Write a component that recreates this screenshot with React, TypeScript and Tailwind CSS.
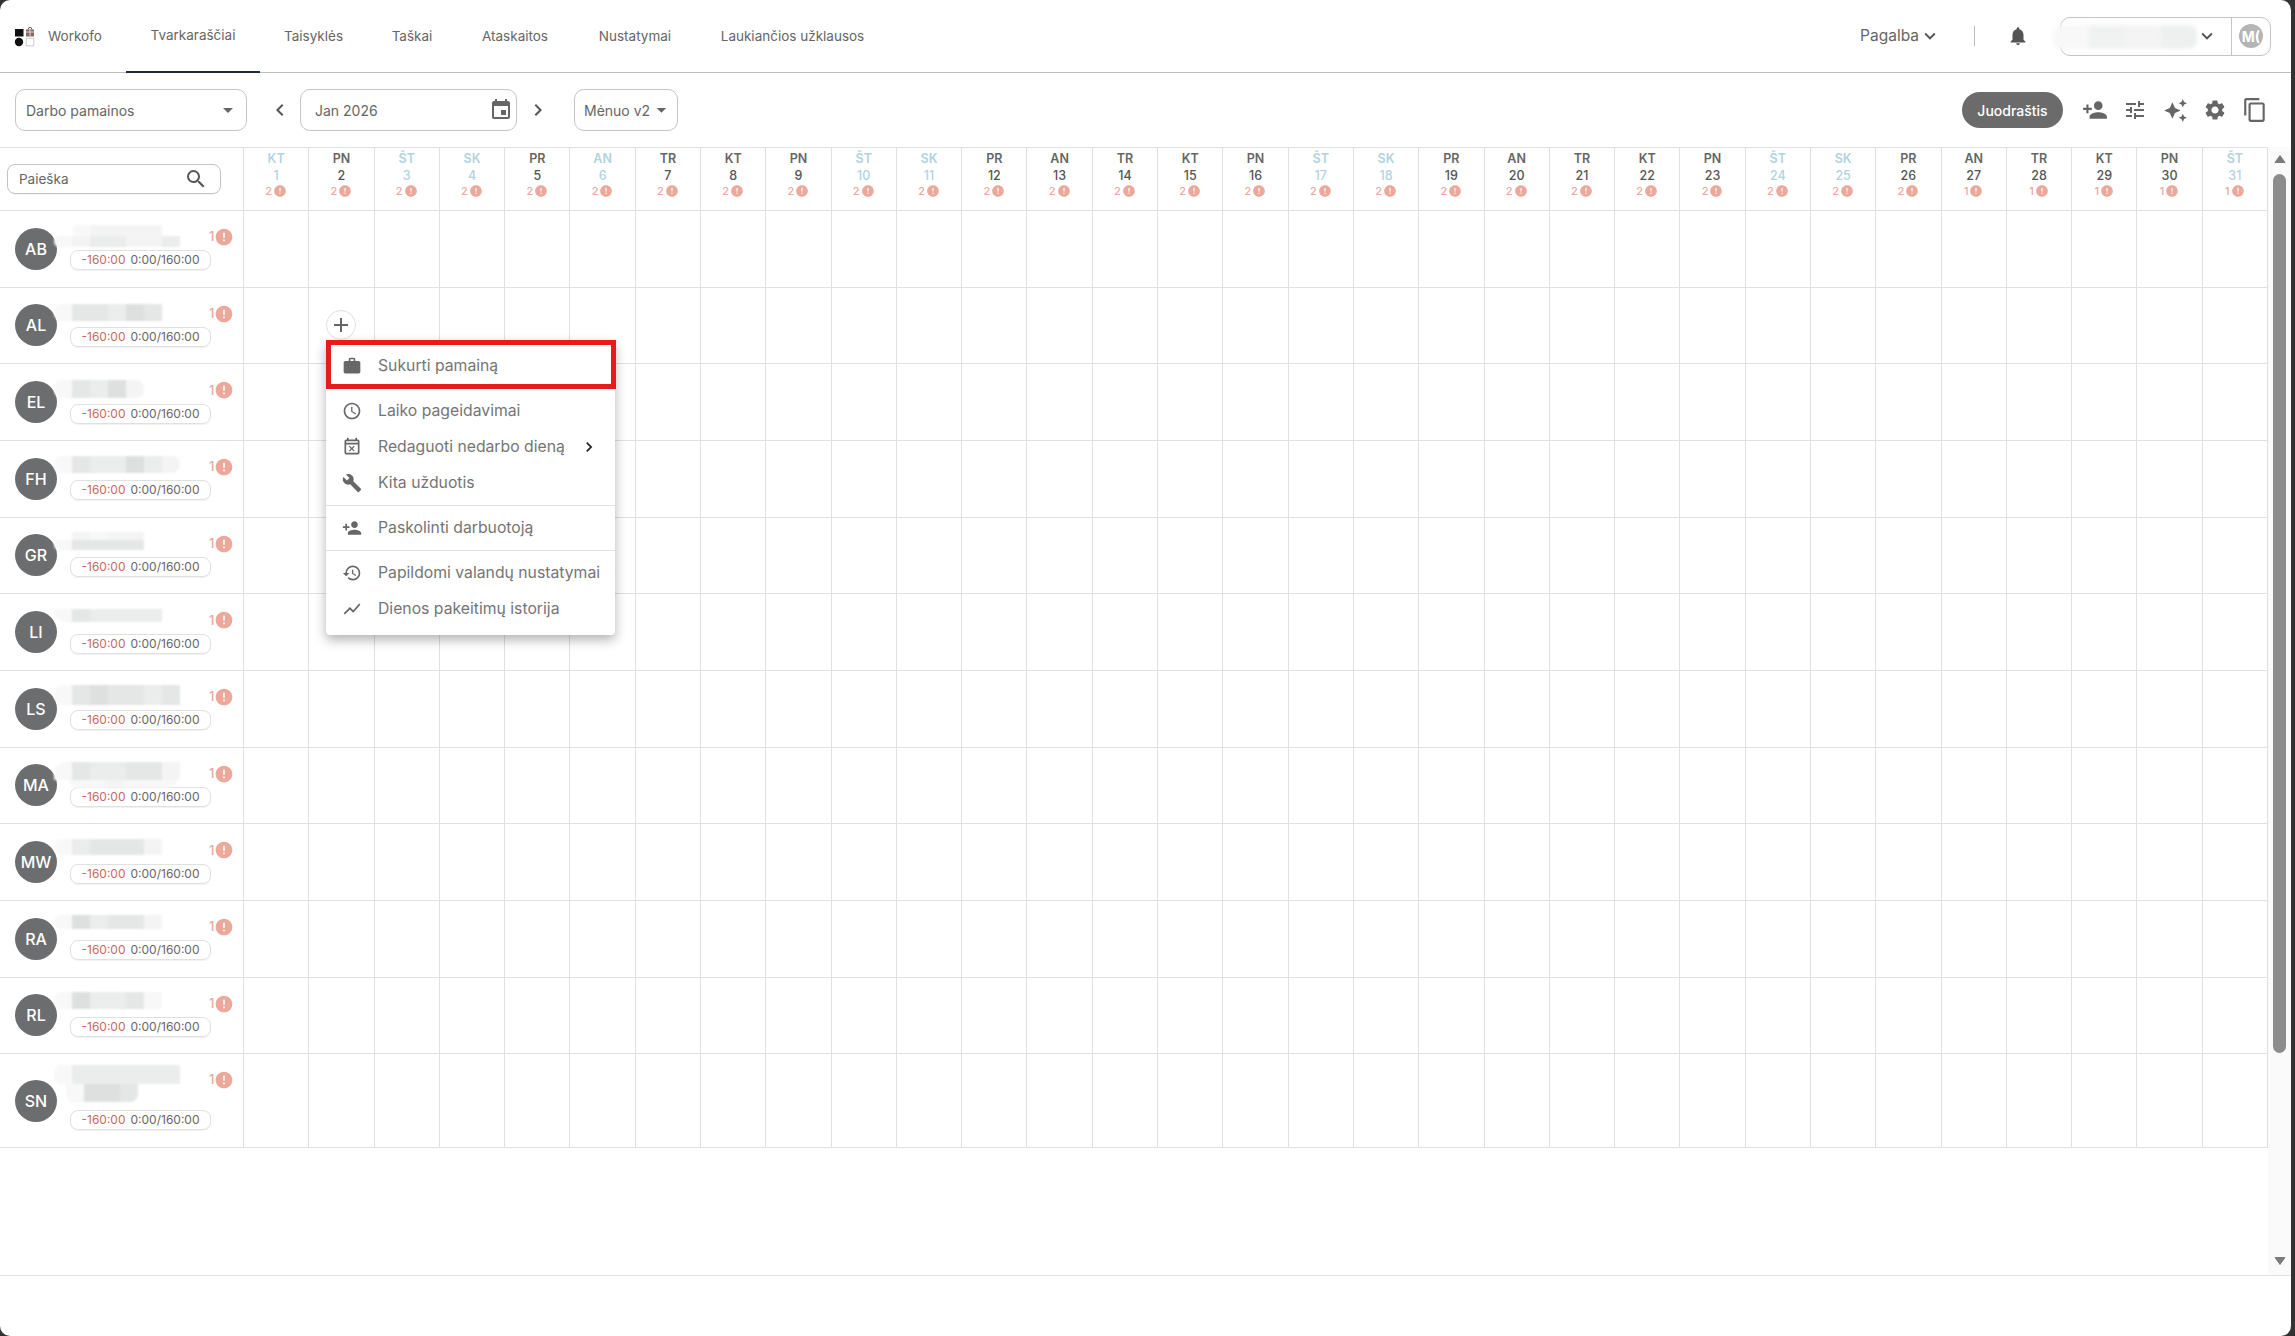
import React from "react";
import {
  MdAccessTime, MdAdd, MdArrowDropDown, MdAutoAwesome, MdBuild, MdChevronLeft, MdChevronRight, MdError, MdEvent,
  MdHistory, MdKeyboardArrowDown, MdNotifications, MdOutlineContentCopy, MdOutlineEventBusy, MdPersonAdd, MdSearch,
  MdSettings, MdShowChart, MdTune, MdWork,
} from "react-icons/md";

const tabs = [
  { label: "Tvarkaraščiai", w: "w-[134px]", active: true },
  { label: "Taisyklės", w: "w-[107px]" },
  { label: "Taškai", w: "w-[90px]" },
  { label: "Ataskaitos", w: "w-[116px]" },
  { label: "Nustatymai", w: "w-[124px]" },
  { label: "Laukiančios užklausos", w: "w-[191px]" },
];

const seq = ["KT","PN","ŠT","SK","PR","AN","TR","KT","PN","ŠT","SK","PR","AN","TR","KT","PN","ŠT","SK","PR","AN","TR","KT","PN","ŠT","SK","PR","AN","TR","KT","PN","ŠT"];
const off = new Set([1, 3, 4, 6, 10, 11, 17, 18, 24, 25, 31]);
const days = seq.map((n, i) => ({ d: i + 1, n, off: off.has(i + 1), c: i + 1 >= 27 ? 1 : 2 }));

type Strip = { cls: string; tiles: string[] };
const A = "bg-[#f3f4f3]", B = "bg-[#ebecec]", C = "bg-[#e5e6e6]", D = "bg-[#dedfdf]", E = "bg-[#f7f8f7]";

const people: { id: string; big?: boolean; strips: Strip[] }[] = [
  { id: "AB", strips: [
    { cls: "ml-[9px] h-[11px] rounded-l-md", tiles: [E, A, A, A, A] },
    { cls: "-ml-[9px] h-[11px] rounded-l-lg", tiles: [E, A, B, B, A, A, B] },
  ] },
  { id: "AL", strips: [{ cls: "-ml-[9px] mt-[2px] h-[17px] rounded-l-lg", tiles: [E, C, C, B, D, C] }] },
  { id: "EL", strips: [{ cls: "-ml-[9px] mt-[1px] h-[18px] rounded-lg", tiles: [E, C, B, D, A] }] },
  { id: "FH", strips: [{ cls: "-ml-[9px] mt-[1px] h-[17px] rounded-lg", tiles: [E, C, B, B, D, B, A] }] },
  { id: "GR", strips: [
    { cls: "ml-[9px] h-[8px]", tiles: [A, E, A, A] },
    { cls: "-ml-[9px] h-[10px] rounded-l-lg", tiles: [E, C, C, C, C] },
  ] },
  { id: "LI", strips: [{ cls: "-ml-[9px] h-[13px] rounded-bl-xl", tiles: [E, C, B, B, B, B] }] },
  { id: "LS", strips: [{ cls: "-ml-[9px] h-[20px] rounded-l-xl", tiles: [E, C, D, C, C, B, C] }] },
  { id: "MA", strips: [
    { cls: "-ml-[9px] h-[18px] rounded-tl-xl", tiles: [E, C, B, B, C, C, A] },
    { cls: "ml-[6px] h-[8px] rounded-b-lg", tiles: [E, E, A, E, E, E] },
  ] },
  { id: "MW", strips: [{ cls: "-ml-[9px] h-[16px] rounded-l-lg", tiles: [E, B, C, C, C, A] }] },
  { id: "RA", strips: [{ cls: "-ml-[9px] h-[14px] rounded-l-lg", tiles: [E, D, B, C, C, A] }] },
  { id: "RL", strips: [{ cls: "-ml-[9px] h-[17px] rounded-l-lg", tiles: [E, D, B, B, C, E] }] },
  { id: "SN", big: true, strips: [
    { cls: "-ml-[9px] -mt-[4px] h-[19px] rounded-l-lg", tiles: [E, B, B, B, B, B, B] },
    { cls: "ml-[3px] h-[18px] rounded-b-lg", tiles: [E, D, D, C] },
  ] },
];

const menuTop = [{ icon: MdWork, t: "Sukurti pamainą" }];
const menuA = [
  { icon: MdAccessTime, t: "Laiko pageidavimai" },
  { icon: MdOutlineEventBusy, t: "Redaguoti nedarbo dieną", more: true },
  { icon: MdBuild, t: "Kita užduotis" },
];
const menuB = [{ icon: MdPersonAdd, t: "Paskolinti darbuotoją" }];
const menuC = [
  { icon: MdHistory, t: "Papildomi valandų nustatymai" },
  { icon: MdShowChart, t: "Dienos pakeitimų istorija" },
];

function MenuItem({ item }: { item: { icon: React.ComponentType<{ size?: number; className?: string }>; t: string; more?: boolean } }) {
  const Icon = item.icon;
  return (
    <div className="flex h-9 items-center pl-4 text-[15.75px] text-[#757575]">
      <span className="flex w-[36px] shrink-0 items-center"><Icon size={20} className="text-[#666]" /></span>
      <span className="whitespace-nowrap">{item.t}</span>
      {item.more && <MdChevronRight size={20} className="absolute left-[253px] text-[#222]" />}
    </div>
  );
}

function Triangle({ down }: { down?: boolean }) {
  return (
    <svg width="12" height="8" viewBox="0 0 12 8" className="shrink-0">
      <path d={down ? "M1 0.5H11L6 7.5Z" : "M1 7.5H11L6 0.5Z"} fill="#7b7b7b" stroke="#7b7b7b" strokeLinejoin="round" />
    </svg>
  );
}

export default function App() {
  return (
    <div className="h-screen bg-[#333] font-['Inter','Liberation_Sans',sans-serif]">
      <div className="relative flex h-full w-[2291px] flex-col overflow-hidden rounded-[10px] bg-white">
        {/* top bar */}
        <header className="flex h-[73px] shrink-0 items-stretch border-b border-[#bdbdbd] pl-[14px] pr-[20px] text-[#666]">
          <div className="flex items-center">
            <svg width="21" height="20" viewBox="0 0 21 20" className="mr-[13px] mt-[1px]">
              <rect x="1" y="2" width="8.5" height="7.5" fill="#111" />
              <rect x="12" y="2.5" width="8" height="7" fill="#8a6a60" />
              <path d="M16 2.5V9.5M12 5H20" stroke="#eee" strokeWidth="0.8" />
              <path d="M14 2.5L15 0.5H17L18 2.5" stroke="#7a5a50" fill="none" />
              <circle cx="5" cy="15" r="4.2" fill="#111" />
              <rect x="12.3" y="11.3" width="7.5" height="7.5" fill="#fff" stroke="#ccc" />
            </svg>
            <span className="w-[53px] whitespace-nowrap text-[13.5px]">Workofo</span>
          </div>
          <nav className="ml-[25px] flex">
            {tabs.map((t) => (
              <div
                key={t.label}
                className={`flex ${t.w} items-center justify-center whitespace-nowrap text-[13.5px] ${t.active ? "-mb-px border-b-2 border-[#1e2a44]" : ""}`}
              >
                {t.label}
              </div>
            ))}
          </nav>
          <div className="ml-auto flex items-center">
            <span className="text-[15.5px]">Pagalba</span>
            <MdKeyboardArrowDown size={22} className="text-[#555]" />
            <span className="ml-[33px] h-[20px] w-px bg-[#bdbdbd]" />
            <MdNotifications size={22} className="ml-[32px] text-[#555]" />
            <div className="relative ml-[31px] flex h-[39px] w-[211px] items-center justify-end rounded-[10px] border border-[#c4c4c4]">
              <div className="absolute -left-[8px] top-[7px] flex h-[24px] overflow-hidden rounded-lg blur-[2px]">
                <span className="w-[36px] bg-[#f7f8f7]" />
                <span className="w-[36px] bg-[#f0f1f1]" />
                <span className="w-[36px] bg-[#f3f4f3]" />
                <span className="w-[36px] bg-[#eeefef]" />
              </div>
              <MdKeyboardArrowDown size={22} className="mr-[13px] text-[#555]" />
              <div className="flex h-full w-[39px] items-center justify-center border-l border-[#c4c4c4]">
                <div className="flex h-6 w-6 items-center justify-center overflow-hidden rounded-full bg-[#b5b5b5] text-[14px] font-bold text-white">M(</div>
              </div>
            </div>
          </div>
        </header>

        {/* toolbar */}
        <div className="flex h-[74px] shrink-0 items-center pl-[15px] pr-[16px] text-[14px] text-[#666]">
          <div className="flex h-[42px] w-[232px] items-center justify-between rounded-[10px] border border-[#c4c4c4] pl-[10px] pr-[6px]">
            <span>Darbo pamainos</span>
            <MdArrowDropDown size={24} className="text-[#666]" />
          </div>
          <MdChevronLeft size={24} className="ml-[21px] mr-[8px] text-[#555]" />
          <div className="flex h-[42px] w-[217px] items-center justify-between rounded-[10px] border border-[#c4c4c4] pl-[14px] pr-[3px]">
            <span>Jan 2026</span>
            <MdEvent size={24} className="text-[#666]" />
          </div>
          <MdChevronRight size={24} className="ml-[9px] mr-[24px] text-[#555]" />
          <div className="flex h-[42px] w-[104px] items-center justify-between rounded-[10px] border border-[#c4c4c4] pl-[9px] pr-[4px]">
            <span className="whitespace-nowrap">Mėnuo v2</span>
            <MdArrowDropDown size={24} className="text-[#666]" />
          </div>
          <div className="ml-auto flex items-center">
            <div className="mr-[12px] flex h-9 w-[101px] items-center justify-center rounded-full bg-[#6b6b6b] text-[14px] font-medium text-white">Juodraštis</div>
            <span className="flex w-10 justify-center"><MdPersonAdd size={26} /></span>
            <span className="flex w-10 justify-center"><MdTune size={24} /></span>
            <span className="flex w-10 justify-center"><MdAutoAwesome size={25} /></span>
            <span className="flex w-10 justify-center"><MdSettings size={24} /></span>
            <span className="flex w-10 justify-center"><MdOutlineContentCopy size={26} /></span>
          </div>
        </div>

        {/* schedule */}
        <div className="flex min-h-0 flex-1">
          <div className="grid h-fit w-[2268px] shrink-0 grid-cols-[244px_repeat(31,1fr)] grid-rows-[63px_repeat(11,76.67px)_94px] border-t border-[#e0e0e0]">
            <div className="flex items-center border-b border-r border-[#e0e0e0] pl-[7px]">
              <div className="flex h-[30px] w-[214px] items-center justify-between rounded-[8px] border border-[#c4c4c4] pl-[11px] pr-[12px] text-[13.5px] text-[#666] shadow-[0_1px_1px_rgba(0,0,0,0.05)]">
                <span>Paieška</span>
                <MdSearch size={24} className="text-[#555]" />
              </div>
            </div>
            {days.map((d) => (
              <div key={d.d} className={`flex flex-col items-center border-b border-r border-[#e0e0e0] pt-[2px] ${d.off ? "text-[#b2d3e0]" : "text-[#666]"}`}>
                <span className="h-[17px] text-[12.5px] font-semibold leading-[17px]">{d.n}</span>
                <span className={`h-[17px] text-[12.5px] font-medium leading-[17px] ${d.off ? "" : "text-[#555]"}`}>{d.d}</span>
                <span className="flex h-[14px] items-center gap-[1px] text-[11px] font-medium text-[#eca89b]">
                  {d.c}
                  <MdError size={14} className="text-[#eca89b]" />
                </span>
              </div>
            ))}
            {people.flatMap((p, r) => [
              <div key={p.id} className="flex items-start border-b border-r border-[#e0e0e0] pl-[15px]">
                <div className="flex h-full items-center">
                  <div className="flex h-[42px] w-[42px] items-center justify-center rounded-full bg-[#6c6d6f] text-[16px] font-medium text-white">{p.id}</div>
                </div>
                <div className="ml-[6px] flex h-full w-[148px] flex-col justify-center pb-[2px]">
                  <div className={`${p.big ? "mb-[5px] h-[36px]" : "mb-[3px] h-[22px]"} blur-[1px]`}>
                    {p.strips.map((s, i) => (
                      <div key={i} className={`flex w-fit overflow-hidden ${s.cls}`}>
                        {s.tiles.map((c, j) => <span key={j} className={`w-[18px] ${c}`} />)}
                      </div>
                    ))}
                  </div>
                  <div className="ml-[7px] flex h-[20px] w-[141px] items-center justify-center gap-[5px] rounded-[8px] border border-[#e0e0e0] text-[12px] shadow-[0_1px_1px_rgba(0,0,0,0.06)]">
                    <span className="text-[#c9695f]">-160:00</span>
                    <span className="text-[#666]">0:00/160:00</span>
                  </div>
                </div>
                <div className="-ml-[2px] mt-[16px] flex items-center text-[13px] font-medium text-[#eca89b]">
                  1
                  <MdError size={20} className="text-[#eca89b]" />
                </div>
              </div>,
              ...days.map((d) => (
                <div key={`${p.id}${d.d}`} className="flex items-center justify-center border-b border-r border-[#e0e0e0]">
                  {r === 1 && d.d === 2 && (
                    <div className="flex h-[30px] w-[30px] items-center justify-center rounded-full border border-[#e0e0e0] bg-white text-[#666]">
                      <MdAdd size={24} />
                    </div>
                  )}
                </div>
              )),
            ])}
          </div>
          <div className="flex w-[23px] flex-col items-center bg-[#fafafa] pb-[10px] pt-[8px]">
            <Triangle />
            <div className="mt-[11px] h-[879px] w-[13px] rounded-full bg-[#8c8c8c]" />
            <div className="flex-1" />
            <Triangle down />
          </div>
        </div>
        <footer className="h-[61px] shrink-0 border-t border-[#e0e0e0]" />

        {/* context menu */}
        <div className="absolute left-[326px] top-[340px] w-[289px] rounded-[4px] bg-white py-2 shadow-[0_5px_12px_rgba(0,0,0,0.3)]">
          {menuTop.map((m) => <MenuItem key={m.t} item={m} />)}
          <div className="my-1 h-px bg-[#e0e0e0]" />
          {menuA.map((m) => <MenuItem key={m.t} item={m} />)}
          <div className="my-1 h-px bg-[#e0e0e0]" />
          {menuB.map((m) => <MenuItem key={m.t} item={m} />)}
          <div className="my-1 h-px bg-[#e0e0e0]" />
          {menuC.map((m) => <MenuItem key={m.t} item={m} />)}
          <div className="absolute left-0 top-0 h-[49px] w-[290px] border-[5px] border-[#e61b1b]" />
        </div>
      </div>
    </div>
  );
}
